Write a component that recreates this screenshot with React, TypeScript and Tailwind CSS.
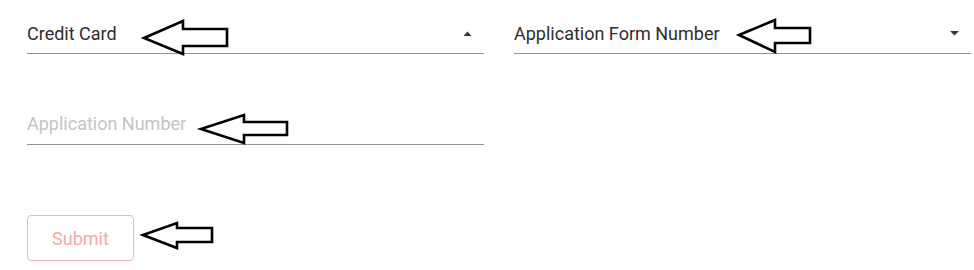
import React from 'react'

interface ArrowProps {
    tip: [number, number]
    baseX: number
    headTop: number
    headBottom: number
    shaftTop: number
    shaftBottom: number
    right: number
}

// hand-drawn callout arrow pointing left
function Arrow({ tip, baseX, headTop, headBottom, shaftTop, shaftBottom, right }: ArrowProps) {
    const points = [
        `${tip[0]},${tip[1]}`,
        `${baseX},${headTop}`,
        `${baseX},${shaftTop}`,
        `${right},${shaftTop}`,
        `${right},${shaftBottom}`,
        `${baseX},${shaftBottom}`,
        `${baseX},${headBottom}`,
    ].join(' ')
    return <polygon points={points} fill="none" stroke="#000" strokeWidth={2.6} strokeLinejoin="miter" />
}

function SelectField({ label, open }: { label: string; open?: boolean }) {
    return (
        <div className="relative border-b border-[#949494] pb-[6px]">
            <div className="text-[18px] leading-[27px] text-[#2e2e2e]">{label}</div>
            <svg className="absolute right-[12px] top-[11px]" width="9" height="5" viewBox="0 0 9 5">
                {open ? <polygon points="0.5,5 4.5,0.5 8.5,5" fill="#3a3a3a" /> : <polygon points="0,0 9,0 4.5,4.5" fill="#3a3a3a" />}
            </svg>
        </div>
    )
}

export default function App() {
    return (
        <div className="relative w-[974px] h-[270px] bg-white overflow-hidden" style={{ fontFamily: 'Roboto, "Liberation Sans", sans-serif' }}>
            <div className="pl-[27px] pr-[3px] pt-[20px]">
                <div className="grid grid-cols-2 gap-x-[30px]">
                    <SelectField label="Credit Card" open />
                    <SelectField label="Application Form Number" />
                </div>

                <div className="grid grid-cols-2 gap-x-[30px] mt-[56px]">
                    <div className="border-b border-[#949494] pb-[7px]">
                        <input
                            type="text"
                            placeholder="Application Number"
                            className="w-full text-[18px] leading-[27px] h-[27px] outline-none bg-transparent text-[#2e2e2e] placeholder:text-[#c4c4c4]"
                        />
                    </div>
                </div>

                <button
                    disabled
                    className="mt-[70px] w-[107px] h-[46px] rounded-[4px] border border-[#f7b5b5] text-[18px] text-[#f6a9a9] bg-white"
                >
                    Submit
                </button>
            </div>

            {/* annotation arrows */}
            <svg className="absolute inset-0 pointer-events-none" width="974" height="270" viewBox="0 0 974 270">
                <Arrow tip={[144, 38]} baseX={183} headTop={21} headBottom={54} shaftTop={29} shaftBottom={46} right={227} />
                <Arrow tip={[739, 35]} baseX={775} headTop={20} headBottom={52} shaftTop={28} shaftBottom={43} right={810} />
                <Arrow tip={[201, 129]} baseX={244} headTop={115} headBottom={143} shaftTop={122} shaftBottom={135} right={287} />
                <Arrow tip={[143, 235]} baseX={177} headTop={223} headBottom={248} shaftTop={228} shaftBottom={242} right={212} />
            </svg>
        </div>
    )
}
